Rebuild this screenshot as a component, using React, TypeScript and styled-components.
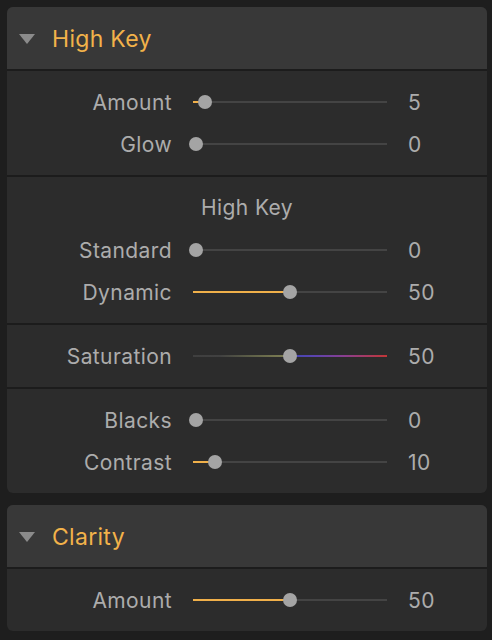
import React from "react";
import styled, { createGlobalStyle } from "styled-components";

const GlobalStyle = createGlobalStyle`
    html, body {
        margin: 0;
        padding: 0;
        background: #1e1e1e;
    }
    body {
        font-family: Inter, "Open Sans", sans-serif;
    }
`

type SliderKind = "plain" | "saturation";

type SliderRow = { label: string, value: number, kind?: SliderKind };

type Section = { title?: string, rows: SliderRow[] };

type PanelData = { title: string, sections: Section[] };

const panels: PanelData[] = [
    {
        title: "High Key",
        sections: [
            { rows: [{ label: "Amount", value: 5 }, { label: "Glow", value: 0 }] },
            { title: "High Key", rows: [{ label: "Standard", value: 0 }, { label: "Dynamic", value: 50 }] },
            { rows: [{ label: "Saturation", value: 50, kind: "saturation" }] },
            { rows: [{ label: "Blacks", value: 0 }, { label: "Contrast", value: 10 }] },
        ],
    },
    {
        title: "Clarity",
        sections: [
            { rows: [{ label: "Amount", value: 50 }] },
        ],
    },
];

// thumb travel inside the 194px track
const THUMB_START = 3;
const THUMB_TRAVEL = 188;

const Slider = (props: { value: number, kind: SliderKind }) => {
    const center = THUMB_START + props.value / 100 * THUMB_TRAVEL;
    return (
        <Track kind = { props.kind }>
            { props.kind === "plain" && props.value > 0 && <Fill style = {{ width: center }} /> }
            <Thumb style = {{ left: center - 7 }} />
        </Track>
    );
}

const Panel = (props: { data: PanelData }) => {
    return (
        <PanelBox>
            <Header>
                <Caret viewBox = "0 0 16 10" width = "16" height = "10">
                    <path d = "M0 0 L16 0 L8 10 Z" fill = "#8b8b8b" />
                </Caret>
                <HeaderTitle>{ props.data.title }</HeaderTitle>
            </Header>
            {
                props.data.sections.map((section, i) => (
                    <SectionBox key = { i }>
                        { section.title && <SubTitle>{ section.title }</SubTitle> }
                        {
                            section.rows.map(row => (
                                <Row key = { row.label }>
                                    <Label>{ row.label }</Label>
                                    <Slider value = { row.value } kind = { row.kind ?? "plain" } />
                                    <Value>{ row.value }</Value>
                                </Row>
                            ))
                        }
                    </SectionBox>
                ))
            }
        </PanelBox>
    );
}

const App = () => {
    return (
        <>
            <GlobalStyle />
            <Page>
                { panels.map(p => <Panel key = { p.title } data = { p } />) }
            </Page>
        </>
    );
}

export default App;

const Page = styled.div`
    display: flex;
    flex-direction: column;
    gap: 12px;
    padding: 7px 5px 7px 7px;
`

const PanelBox = styled.div`
    background-color: #2c2c2c;
    border-radius: 6px;
    overflow: hidden;
`

const Header = styled.div`
    height: 62px;
    display: flex;
    align-items: center;
    background-color: #383838;
    padding-left: 12px;
`

const Caret = styled.svg`
    display: block;
    margin-right: 17px;
    margin-top: 1px;
`

const HeaderTitle = styled.span`
    color: #f2b24a;
    font-size: 23px;
    letter-spacing: 0.3px;
    font-weight: 400;
    margin-top: 1px;
`

const SectionBox = styled.div`
    border-top: 2px solid #1c1c1c;
    padding: 10px 0;
`

const SubTitle = styled.div`
    height: 42px;
    line-height: 42px;
    text-align: center;
    color: #acacac;
    font-size: 21px;
    letter-spacing: 0.4px;
`

const Row = styled.div`
    height: 42px;
    display: grid;
    grid-template-columns: 165px 194px 1fr;
    column-gap: 21px;
    align-items: center;
`

const Label = styled.div`
    text-align: right;
    color: #acacac;
    font-size: 21px;
    letter-spacing: 0.4px;
    margin-top: 1px;
`

const Value = styled.div`
    color: #acacac;
    font-size: 21px;
    letter-spacing: 0.4px;
    margin-top: 1px;
`

const Track = styled.div<{ kind: SliderKind }>`
    position: relative;
    height: 2px;
    background: ${ props => props.kind === "saturation"
        ? "linear-gradient(to right, #3f3f3f 0%, #414141 14%, #5e6048 30%, #74754f 42%, #7f7f55 50%, #4646b0 53%, #5a44b0 62%, #8a3f90 78%, #c23636 100%)"
        : "#444444" };
`

const Fill = styled.div`
    position: absolute;
    left: 0;
    top: 0;
    height: 2px;
    background-color: #f0b04a;
`

const Thumb = styled.div`
    position: absolute;
    top: -6px;
    width: 14px;
    height: 14px;
    border-radius: 50%;
    background-color: #a4a4a4;
`
